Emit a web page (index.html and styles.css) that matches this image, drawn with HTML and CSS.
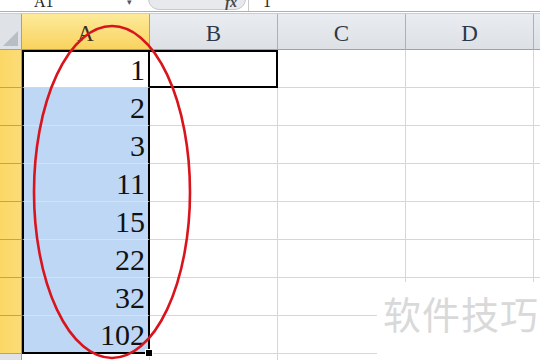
FILE: index.html
```html
<!DOCTYPE html>
<html lang="zh-CN">
<head>
    <meta charset="UTF-8">
    <title>Excel 选区</title>
    <link rel="stylesheet" href="styles.css">
</head>
<body>
    <div class="sheet">
        <div class="formula-bar">
            <div class="name-box"><span>A1</span><span class="caret">▾</span></div>
            <div class="fx-box"><span class="fx">fx</span></div>
            <div class="formula-text">1</div>
        </div>
        <div class="bar-sep"></div>

        <div class="grid">
            <div class="corner"><div class="tri"></div></div>
            <div class="col-head active">A</div>
            <div class="col-head">B</div>
            <div class="col-head">C</div>
            <div class="col-head">D</div>
            <div class="col-head last"></div>
        </div>
        <div class="rows" id="rows"></div>

        <svg class="ring" width="540" height="360" viewBox="0 0 540 360">
            <ellipse cx="112" cy="192" rx="78" ry="166" fill="none" stroke="#d9141c" stroke-width="2.6"/>
        </svg>

        <div class="watermark">软件技巧</div>
    </div>

    <script>
        const values = [1, 2, 3, 11, 15, 22, 32, 102];
        const rowsEl = document.getElementById('rows');

        values.forEach((v, i) => {
            const row = document.createElement('div');
            row.className = 'grid row';
            row.innerHTML =
                '<div class="row-head"></div>' +
                `<div class="cell a ${i === 0 ? 'first' : 'sel'} ${i === values.length - 1 ? 'end' : ''}">${v}</div>` +
                `<div class="cell ${i === 0 ? 'b1' : ''}"></div>` +
                '<div class="cell"></div>' +
                '<div class="cell"></div>' +
                '<div class="cell last"></div>';
            rowsEl.appendChild(row);
        });

        const extra = document.createElement('div');
        extra.className = 'grid row';
        extra.innerHTML = '<div class="row-head plain"></div><div class="cell"></div><div class="cell"></div><div class="cell"></div><div class="cell"></div><div class="cell last"></div>';
        rowsEl.appendChild(extra);
    </script>
</body>
</html>
```

FILE: styles.css
```css
body {
    margin: 0;
    background: #ffffff;
    font-family: "Liberation Serif", serif;
}
.sheet {
    position: relative;
    width: 540px;
    height: 360px;
    overflow: hidden;
    background: #ffffff;
}
.formula-bar {
    display: flex;
    height: 11px;
    overflow: hidden;
    font-size: 16px;
    color: #222;
}
.name-box {
    width: 140px;
    display: flex;
    justify-content: space-between;
    padding: 0 8px 0 34px;
    box-sizing: border-box;
    line-height: 4px;
}
.caret {
    font-size: 9px;
    color: #555;
}
.fx-box {
    width: 98px;
    margin-left: 8px;
    height: 22px;
    margin-top: -12px;
    background: #e7e9ec;
    border: 1px solid #c5c9cf;
    border-radius: 12px;
    display: flex;
    justify-content: flex-end;
    align-items: flex-end;
    padding-right: 8px;
    box-sizing: border-box;
}
.fx {
    font-style: italic;
    font-weight: bold;
    font-size: 14px;
    line-height: 12px;
    color: #444;
}
.formula-text {
    border-left: 1px solid #c8c8c8;
    margin-left: 2px;
    padding-left: 14px;
    line-height: 4px;
}
.bar-sep {
    height: 1px;
    border-top: 1px solid #a9afb7;
    border-bottom: 1px solid #c9ced5;
    background: #ffffff;
}
.grid {
    display: grid;
    grid-template-columns: 22px 128px 128px 128px 128px 6px;
}
.corner {
    height: 36px;
    background: #dfe3e8;
    border-right: 1px solid #9aa3ad;
    border-bottom: 1px solid #9aa3ad;
    box-sizing: border-box;
    position: relative;
}
.tri {
    position: absolute;
    right: 3px;
    bottom: 3px;
    width: 0;
    height: 0;
    border-left: 15px solid transparent;
    border-bottom: 15px solid #b7bec6;
}
.col-head {
    height: 36px;
    box-sizing: border-box;
    background: linear-gradient(#e9ecf0, #dde1e6);
    border-right: 1px solid #a9b1ba;
    border-bottom: 1px solid #9aa3ad;
    text-align: center;
    font-size: 23px;
    line-height: 40px;
    color: #2b3a4a;
}
.col-head.active {
    background: linear-gradient(#fdea9a, #f9d35f);
    border-right-color: #c6a33f;
    border-bottom-color: #c39a2c;
    color: #3a3020;
}
.col-head.last {
    border-right: none;
}
.row-head {
    height: 38px;
    box-sizing: border-box;
    background: linear-gradient(90deg, #fbd765, #fcdc78);
    border-right: 1px solid #c39a2c;
    border-bottom: 1px solid #c9a446;
}
.row-head.plain {
    background: #dfe3e8;
    border-right-color: #9aa3ad;
    border-bottom-color: #b5bcc4;
}
.cell {
    height: 38px;
    box-sizing: border-box;
    border-right: 1px solid #d6d6d6;
    border-bottom: 1px solid #d6d6d6;
}
.cell.last {
    border-right: none;
}
.cell.a {
    text-align: right;
    font-size: 30px;
    line-height: 40px;
    padding-right: 3px;
    color: #111;
    border-left: 2px solid #000;
    border-right: 2px solid #000;
}
.cell.a.sel {
    background: #bdd7f5;
    border-bottom-color: #d3e3f6;
}
.cell.a.first {
    border-top: 2px solid #000;
    border-bottom-color: #d6d6d6;
    line-height: 36px;
}
.cell.a.end {
    border-bottom: 2px solid #000;
    line-height: 38px;
    position: relative;
}
.cell.a.end::after {
    content: "";
    position: absolute;
    right: -5px;
    bottom: -5px;
    width: 6px;
    height: 6px;
    background: #000;
    border: 1px solid #fff;
}
.cell.b1 {
    border: 2px solid #000;
    border-left: none;
}
.ring {
    position: absolute;
    left: 0;
    top: 0;
    pointer-events: none;
}
.watermark {
    position: absolute;
    left: 377px;
    top: 282px;
    width: 163px;
    height: 78px;
    background: #ffffff;
    font-family: "Noto Sans CJK SC", sans-serif;
    font-size: 38px;
    line-height: 62px;
    padding-left: 6px;
    box-sizing: border-box;
    color: #d9d9d9;
    letter-spacing: 1px;
}
```
